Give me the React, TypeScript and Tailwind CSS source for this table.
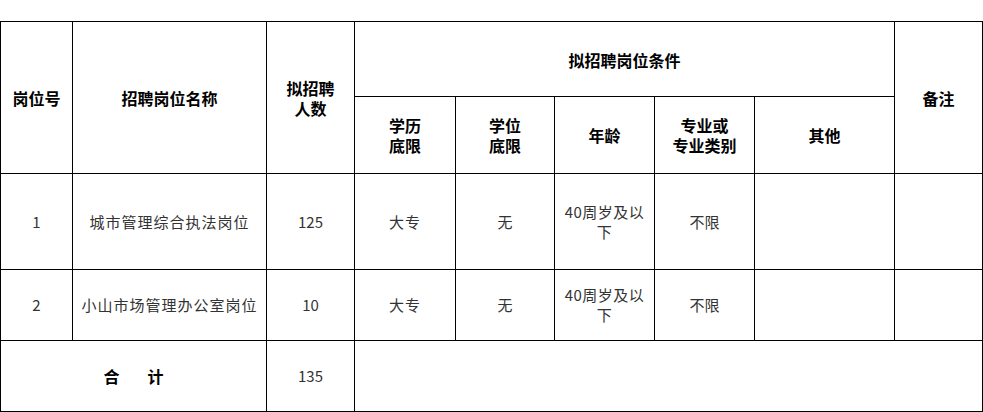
const rows = [
  { no: '1', name: '城市管理综合执法岗位', count: '125', edu: '大专', degree: '无', age: ['40周岁及以', '下'], major: '不限', h: 'h-[96px]' },
  { no: '2', name: '小山市场管理办公室岗位', count: '10', edu: '大专', degree: '无', age: ['40周岁及以', '下'], major: '不限', h: 'h-[71px]' },
];

const th = 'border border-black text-center align-middle font-bold text-[16px] leading-[20px] text-black p-0';
const td = 'border border-black text-center align-middle text-[15px] leading-[20px] text-[#333] p-0';

export default function App() {
  return (
    <div
      className="w-[983px] h-[412px] bg-white pt-[21px] overflow-hidden"
      style={{ fontFamily: '"Noto Sans CJK SC", "Noto Sans", sans-serif' }}
    >
      <table className="table-fixed border-collapse w-[982px]">
        <colgroup>
          <col className="w-[72px]" />
          <col className="w-[194px]" />
          <col className="w-[88px]" />
          <col className="w-[101px]" />
          <col className="w-[99px]" />
          <col className="w-[100px]" />
          <col className="w-[100px]" />
          <col className="w-[140px]" />
          <col className="w-[88px]" />
        </colgroup>
        <tbody>
          <tr className="h-[75px]">
            <th rowSpan={2} className={th}>岗位号</th>
            <th rowSpan={2} className={th}>招聘岗位名称</th>
            <th rowSpan={2} className={th}>
              拟招聘<br />人数
            </th>
            <th colSpan={5} className={th}>
              <div className="mt-[2px]">拟招聘岗位条件</div>
            </th>
            <th rowSpan={2} className={th}>备注</th>
          </tr>
          <tr className="h-[77px]">
            <th className={th}>学历<br />底限</th>
            <th className={th}>学位<br />底限</th>
            <th className={th}>年龄</th>
            <th className={th}>专业或<br />专业类别</th>
            <th className={th}>其他</th>
          </tr>
          {rows.map(r => (
            <tr key={r.no} className={r.h}>
              <td className={td}>{r.no}</td>
              <td className={`${td} tracking-[1px]`}>{r.name}</td>
              <td className={td}>{r.count}</td>
              <td className={`${td} tracking-[1px]`}>{r.edu}</td>
              <td className={td}>{r.degree}</td>
              <td className={`${td} tracking-[0.5px]`}>
                {r.age[0]}<br />{r.age[1]}
              </td>
              <td className={td}>{r.major}</td>
              <td className={td}></td>
              <td className={td}></td>
            </tr>
          ))}
          <tr className="h-[71px]">
            <td colSpan={2} className={`${td} font-bold text-black text-[16px]`}>
              <span>合</span>
              <span className="ml-[28px]">计</span>
            </td>
            <td className={td}>135</td>
            <td colSpan={6} className={td}></td>
          </tr>
        </tbody>
      </table>
    </div>
  );
}
